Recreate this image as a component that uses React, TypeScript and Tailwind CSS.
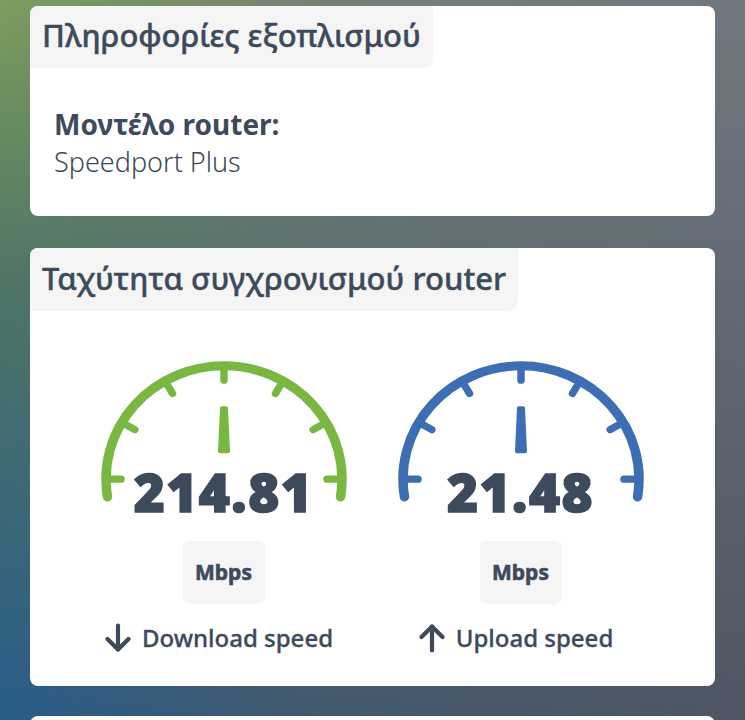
import { Fragment } from "react";

type Gauge = {
    value: string;
    color: string;
    label: string;
    dir: "down" | "up";
};

const gauges: Gauge[] = [
    { value: "214.81", color: "#79b743", label: "Download speed", dir: "down" },
    { value: "21.48", color: "#3d6db2", label: "Upload speed", dir: "up" },
];

// gauge geometry, in viewBox units
const CX = 125;
const CY = 123;
const R = 118;

function polar(r: number, deg: number) {
    const a = (deg * Math.PI) / 180;
    return [CX + r * Math.cos(a), CY - r * Math.sin(a)];
}

function Dial({ color }: { color: string }) {
    const [sx, sy] = polar(R, 189);
    const [ex, ey] = polar(R, -9);
    const ticks = [0, 30, 60, 90, 120, 150, 180];

    return (
        <svg width="250" height="146" viewBox="0 0 250 152" preserveAspectRatio="none" className="block">
            <path
                d={`M ${sx} ${sy} A ${R} ${R} 0 1 1 ${ex} ${ey}`}
                fill="none"
                stroke={color}
                strokeWidth="9.5"
                strokeLinecap="round"
            />
            {ticks.map((t) => {
                const [x1, y1] = polar(R, t);
                const [x2, y2] = polar(103, t);
                return (
                    <line
                        key={t}
                        x1={x1}
                        y1={y1}
                        x2={x2}
                        y2={y2}
                        stroke={color}
                        strokeWidth="7.5"
                        strokeLinecap="round"
                    />
                );
            })}
            <polygon
                points="123,49 127,49 129,94 121,94"
                fill={color}
                stroke={color}
                strokeWidth="4"
                strokeLinejoin="round"
            />
        </svg>
    );
}

function Arrow({ dir }: { dir: "down" | "up" }) {
    return (
        <svg width="26" height="30" viewBox="0 0 26 30" fill="none" stroke="#3d4a5c" strokeWidth="4.2" strokeLinecap="round" strokeLinejoin="round">
            {dir === "down" ? (
                <Fragment>
                    <path d="M13 2.5v24" />
                    <path d="M2.5 16l10.5 10.5L23.5 16" />
                </Fragment>
            ) : (
                <Fragment>
                    <path d="M13 27.5v-24" />
                    <path d="M2.5 14L13 3.5 23.5 14" />
                </Fragment>
            )}
        </svg>
    );
}

export default function App() {
    return (
        <div className="w-[745px] h-[720px] overflow-hidden px-[30px] pt-[6px] flex flex-col font-['Noto_Sans',sans-serif] bg-[linear-gradient(to_bottom,rgba(255,255,255,0.12),rgba(0,0,0,0.14)),linear-gradient(to_right,rgba(92,100,112,0)_0%,rgba(92,100,112,0.7)_45%,rgba(92,100,112,0.96)_100%),linear-gradient(to_bottom,#6b8f46_0%,#43705f_40%,#2e6b9f_100%)]">
            {/* Equipment info */}
            <div className="flex flex-col h-[210px] shrink-0 bg-white rounded-lg">
                <div className="self-start h-[62px] px-3 bg-[#f5f5f6] rounded-tl-lg rounded-br-[10px] text-[31px] font-medium leading-[58px] text-[#3d4a5c] [-webkit-text-stroke:0.4px_#3d4a5c]">
                    Πληροφορίες εξοπλισμού
                </div>
                <div className="flex flex-col pl-6 mt-[37px] text-[#3d4a5c]">
                    <span className="text-[28px] font-bold leading-[38px]">Μοντέλο router:</span>
                    <span className="text-[27px] font-light leading-[38px]">Speedport Plus</span>
                </div>
            </div>

            {/* Sync speed */}
            <div className="flex flex-col h-[438px] shrink-0 mt-[32px] bg-white rounded-lg">
                <div className="self-start h-[63px] px-3 bg-[#f5f5f6] rounded-tl-lg rounded-br-[10px] text-[31px] font-medium leading-[60px] text-[#3d4a5c] [-webkit-text-stroke:0.4px_#3d4a5c]">
                    Ταχύτητα συγχρονισμού router
                </div>
                <div className="flex justify-center gap-[47px] mt-[50px] pr-[1px]">
                    {gauges.map((g) => (
                        <div key={g.label} className="flex flex-col items-center w-[250px]">
                            <Dial color={g.color} />
                            <div className="-mt-[42px] text-[53px] font-black leading-none tracking-[1.5px] text-[#3d4a5c] [-webkit-text-stroke:1.6px_#3d4a5c]">
                                {g.value}
                            </div>
                            <div className="mt-[23px] flex items-center justify-center w-[82px] h-[63px] rounded-lg bg-[#f5f5f6] text-[21px] font-bold text-[#3d4a5c] [-webkit-text-stroke:0.6px_#3d4a5c]">
                                Mbps
                            </div>
                            <div className="mt-[18px] flex items-center gap-[11px] pr-[9px] text-[24px] font-medium leading-[32px] text-[#3d4a5c] [-webkit-text-stroke:0.3px_#3d4a5c]">
                                <Arrow dir={g.dir} />
                                <span>{g.label}</span>
                            </div>
                        </div>
                    ))}
                </div>
            </div>

            {/* Next card, cut off */}
            <div className="h-[40px] shrink-0 mt-[30px] bg-white rounded-lg" />
        </div>
    );
}
